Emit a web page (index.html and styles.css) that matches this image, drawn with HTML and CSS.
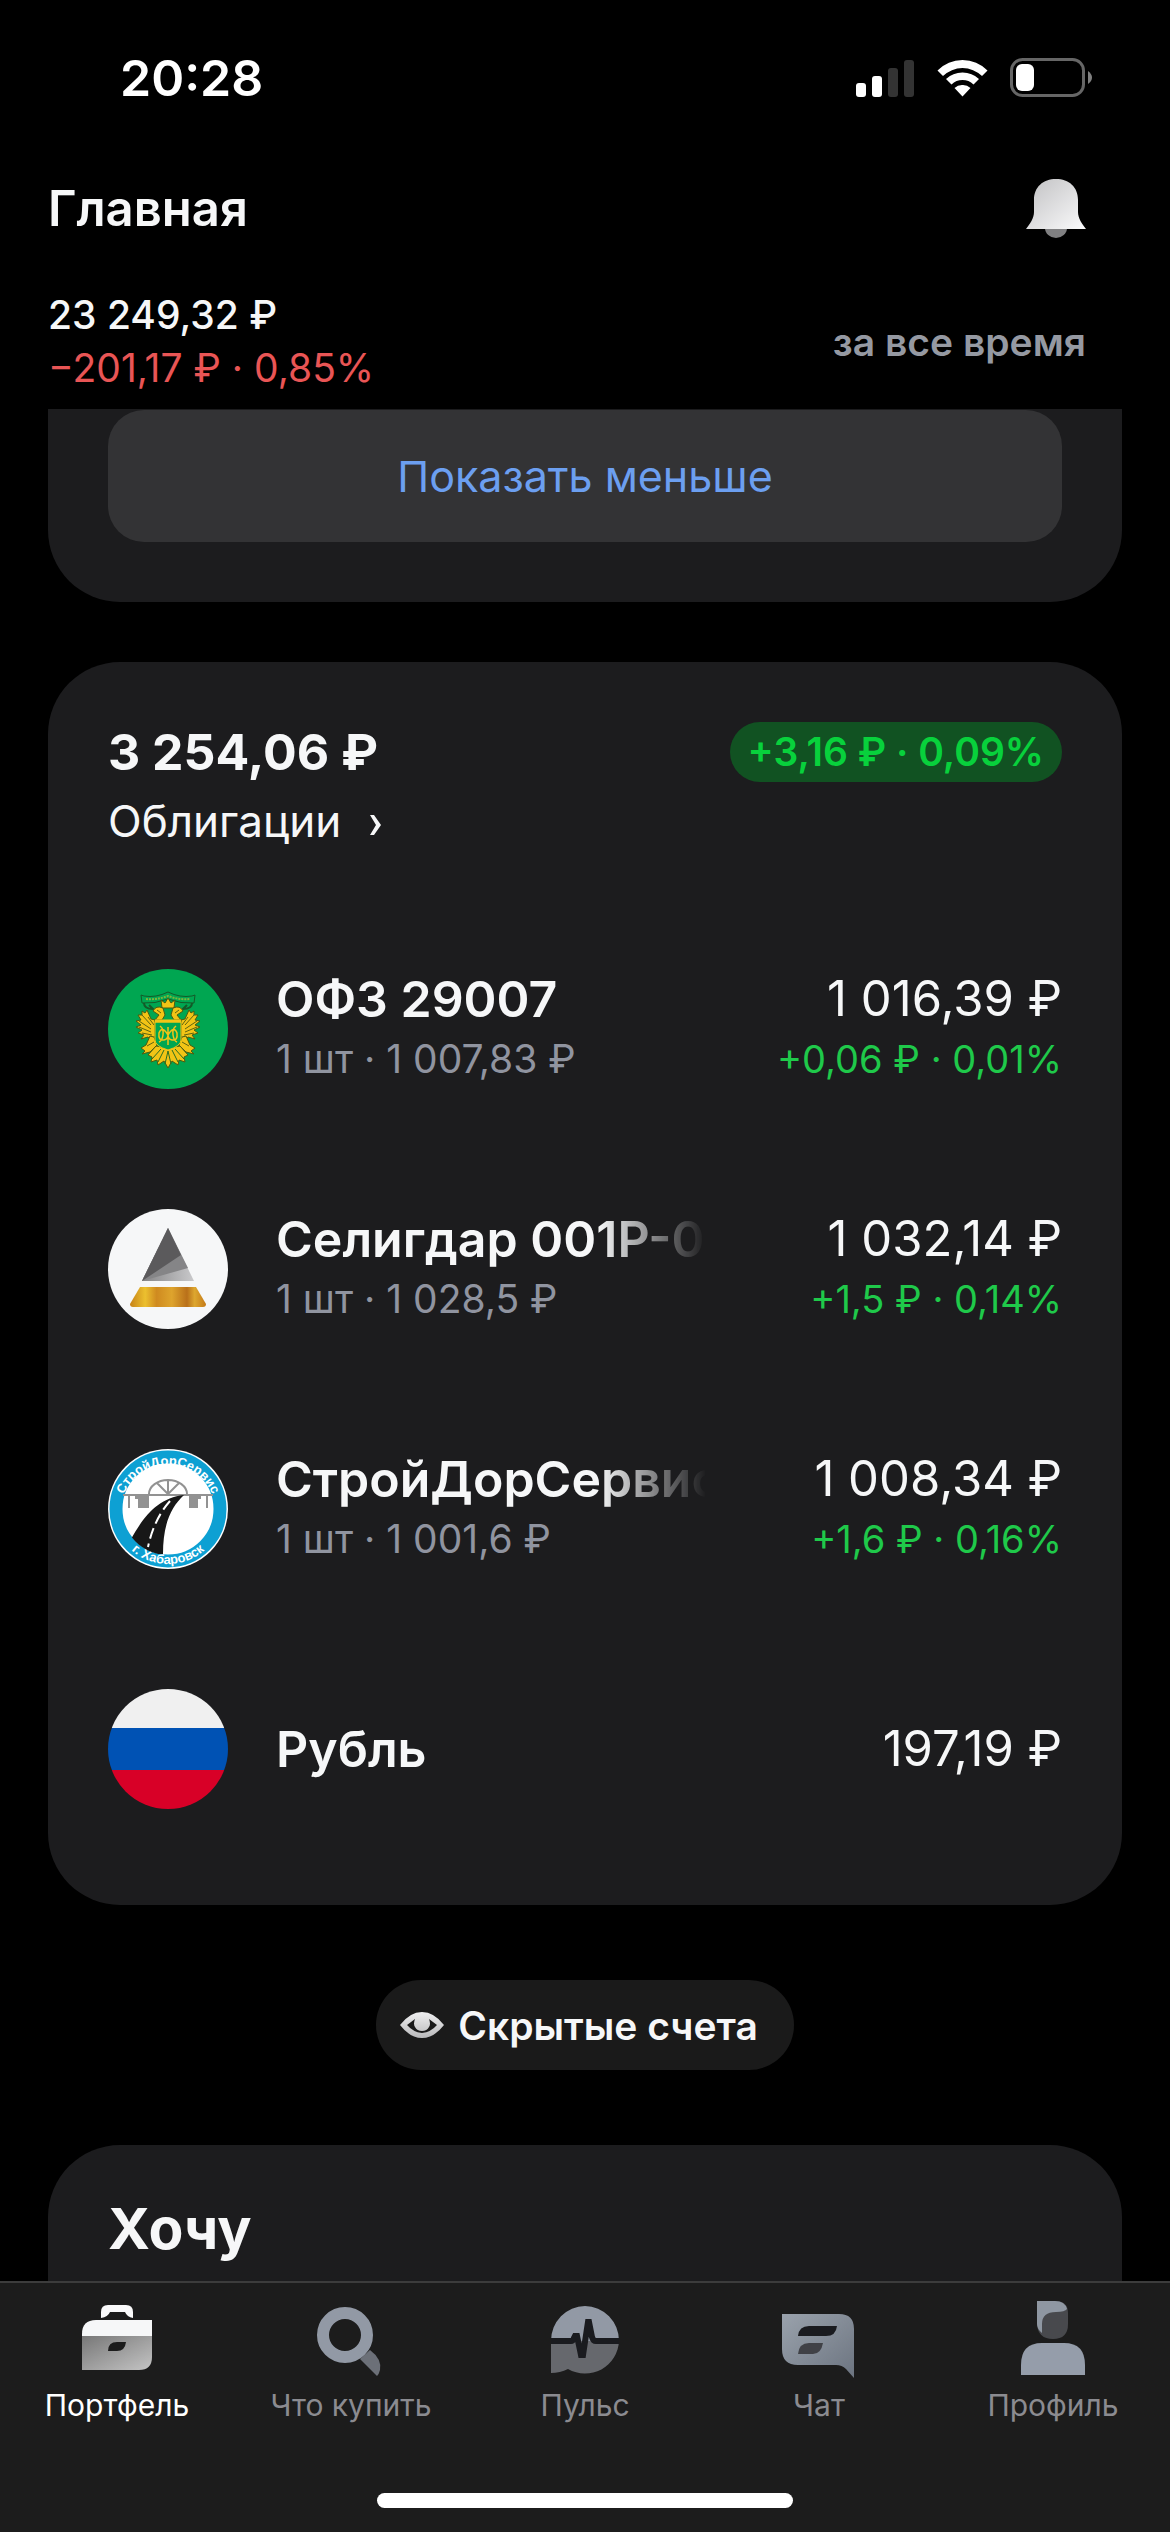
FILE: index.html
```html
<!DOCTYPE html>
<html lang="ru">

<head>
  <meta charset="UTF-8" />
  <meta name="viewport" content="width=device-width, initial-scale=1.0" />
  <title>Главная</title>
  <link rel="stylesheet" href="styles.css">
</head>

<body>
  <div class="status-bar">
    <span class="time">20:28</span>
    <div class="status-icons">
      <svg width="59" height="38" viewBox="0 0 59 38">
        <rect x="0" y="24" width="10" height="14" rx="3" fill="#fff" />
        <rect x="16" y="17" width="10" height="21" rx="3" fill="#fff" />
        <rect x="32" y="9" width="10" height="29" rx="3" fill="#333" />
        <rect x="48" y="1" width="10" height="37" rx="3" fill="#333" />
      </svg>
      <svg width="51" height="38" viewBox="0 0 51 38" fill="#fff">
        <path d="M25.500 1 A36 36 0 0 1 50.500 11.500 L45 17 A28 28 0 0 0 6 17 L.5 11.500 A36 36 0 0 1 25.500 1Z" />
        <path d="M25.500 13.500 A24 24 0 0 1 42 20 L36.500 25.500 A16 16 0 0 0 14.500 25.500 L9 20 A24 24 0 0 1 25.500 13.500Z" />
        <path d="M25.500 26 A11 11 0 0 1 33.500 29 L25.500 37.500 L17.500 29 A11 11 0 0 1 25.500 26Z" />
      </svg>
      <svg width="82" height="40" viewBox="0 0 82 40">
        <rect x="1.500" y="1.500" width="72" height="36" rx="11" fill="none" stroke="#666" stroke-width="3" />
        <rect x="6" y="6" width="18" height="27" rx="6" fill="#fff" />
        <path d="M78 13 Q82 16 82 19.500 T78 26Z" fill="#808080" />
      </svg>
    </div>
  </div>

  <header class="header">
    <div class="title-row">
      <h1>Главная</h1>
      <button class="bell" aria-label="Уведомления">
        <svg width="60" height="60" viewBox="0 0 60 60">
          <defs>
            <linearGradient id="bell" x1="0" y1="0" x2="1" y2="1">
              <stop offset="0" stop-color="#c0c0c2" />
              <stop offset="1" stop-color="#fbfbfc" />
            </linearGradient>
          </defs>
          <ellipse cx="30" cy="50" rx="11" ry="10" fill="#808082" />
          <path d="M0 51 C4 46 8 40 8 34 V22 C8 9 17 1 30 1 S52 9 52 22 V34 C52 40 56 46 60 51Z" fill="url(#bell)" />
        </svg>
      </button>
    </div>
    <div class="summary">
      <div>
        <div class="total">23 249,32 ₽</div>
        <div class="loss">−201,17 ₽ · 0,85%</div>
      </div>
      <span class="period">за все время</span>
    </div>
  </header>

  <main class="content">
    <section class="card card-top">
      <button class="less">Показать меньше</button>
    </section>

    <section class="card card-bonds">
      <div class="bonds-head">
        <h2>3 254,06 ₽</h2>
        <span class="badge">+3,16 ₽ · 0,09%</span>
      </div>
      <a href="#" class="bonds-link">Облигации
        <svg width="13" height="28" viewBox="0 0 13 28"><path d="M1 7 H5 L12 17 L5 27 H1 L7 17Z" fill="#f6f7f8" /></svg>
      </a>

      <ul class="assets">
        <li class="asset">
          <svg class="logo" viewBox="0 0 120 120">
            <circle cx="60" cy="60" r="60" fill="#00a651" />
            <g fill="none" stroke="#145a28" stroke-width="1">
              <path d="M33 26 L36 27 Q48 29 60 23 Q72 29 84 27 L87 26 L86 34 Q73 35 60 30 Q47 35 34 34Z" />
              <path d="M36 34 Q36 40 45 40 L41 36 M84 34 Q84 40 75 40 L79 36" stroke-width="2" />
            </g>
            <path d="M38 30 Q49 31 60 27 Q71 31 82 30" fill="none" stroke="#7db53a" stroke-width="2" stroke-dasharray="2 1" />
            <g fill="#f2c416" stroke="#4c5c10" stroke-width="1">
              <path d="M54 39 L53 31 L57 34 L60 29 L63 34 L67 31 L66 39Z" />
              <path d="M45 42 Q48 36 55 39 L57 46 L54 51 H47 L51 46Z M75 42 Q72 36 65 39 L63 46 L66 51 H73 L69 46Z" />
              <path d="M47 51 L43 50 L39 41 L37 44 L34 42 L34 46 L30 46 L33 51 L28 52 L33 56 L28 58 L34 61 L30 64 L36 66 L33 70 L40 68 L44 73 L47 67Z" />
              <path d="M73 51 L77 50 L81 41 L83 44 L86 42 L86 46 L90 46 L87 51 L92 52 L87 56 L92 58 L86 61 L90 64 L84 66 L87 70 L80 68 L76 73 L73 67Z" />
              <path d="M42 67 L38 76 L33 79 L37 82 L34 85 L42 83 L49 76 L46 68Z M78 67 L82 76 L87 79 L83 82 L86 85 L78 83 L71 76 L74 68Z" />
              <path d="M60 79 L48 77 L40 86 L44 88 L43 93 L49 91 L50 96 L56 92 L60 99 L64 92 L70 96 L71 91 L77 93 L76 88 L80 86 L72 77Z" />
            </g>
            <g fill="none" stroke="#5d6410" stroke-width="1">
              <path d="M34 46 L43 56 M31 52 L43 60 M31 58 L43 63 M34 64 L44 66 M40 48 L46 56" />
              <path d="M86 46 L77 56 M89 52 L77 60 M89 58 L77 63 M86 64 L76 66 M80 48 L74 56" />
              <path d="M39 77 L46 73 M81 77 L74 73 M49 41 L53 44 M71 41 L67 44" />
            </g>
            <path d="M60 82 L57 95 M60 82 L63 95 M56 81 L50 93 M64 81 L70 93 M53 80 L44 90 M67 80 L76 90" stroke="#286d22" stroke-width="1" />
            <path d="M47 53 H73 V71 Q73 77 60 81 Q47 77 47 71Z" fill="#00a651" stroke="#f2c416" stroke-width="1" />
            <path d="M47 52 H73" stroke="#f2c416" stroke-width="3" />
            <path d="M52 57 Q56 60 55 66 T51 73 M68 57 Q64 60 65 66 T69 73 M60 58 V76 M60 66 Q54 56 51 64 Q50 72 56 71 Q60 70 60 66 Q66 56 69 64 Q70 72 64 71 Q60 70 60 66" fill="none" stroke="#f2c416" stroke-width="1.500" />
          </svg>
          <div class="info">
            <div class="name">ОФЗ 29007</div>
            <div class="count">1 шт · 1 007,83 ₽</div>
          </div>
          <div class="value">
            <div class="price">1 016,39 ₽</div>
            <div class="gain">+0,06 ₽ · 0,01%</div>
          </div>
        </li>
        <li class="asset">
          <svg class="logo" viewBox="0 0 120 120">
            <defs>
              <linearGradient id="gold">
                <stop offset="0" stop-color="#c78318" />
                <stop offset=".2" stop-color="#ecc02f" />
                <stop offset=".35" stop-color="#cf8a20" />
                <stop offset=".55" stop-color="#dea42d" />
                <stop offset=".75" stop-color="#b9701a" />
                <stop offset=".85" stop-color="#dda72f" />
                <stop offset="1" stop-color="#c47a18" />
              </linearGradient>
              <linearGradient id="steel">
                <stop offset="0" stop-color="#858587" />
                <stop offset="1" stop-color="#c9c9cb" />
              </linearGradient>
            </defs>
            <circle cx="60" cy="60" r="60" fill="#f6f7f8" />
            <path d="M60 19 L86 72 H34Z" fill="url(#steel)" />
            <path d="M60 19 L80 59 L34 72Z" fill="#858587" />
            <path d="M60 19 L73 46 L34 72Z" fill="#5b5a5c" />
            <path d="M32 78 H88 L98 95 Q98 98 95 98 H25 Q22 98 22 95Z" fill="url(#gold)" />
          </svg>
          <div class="info">
            <div class="name fade">Селигдар 001Р-0</div>
            <div class="count">1 шт · 1 028,5 ₽</div>
          </div>
          <div class="value">
            <div class="price">1 032,14 ₽</div>
            <div class="gain">+1,5 ₽ · 0,14%</div>
          </div>
        </li>
        <li class="asset">
          <svg class="logo" viewBox="0 0 120 120">
            <defs>
              <path id="arc-top" d="M12 64 A48 48 0 0 1 108 64" />
              <path id="arc-bottom" d="M4 59 A56 56 0 0 0 116 59" />
              <clipPath id="inner"><circle cx="60" cy="60" r="46" /></clipPath>
            </defs>
            <circle cx="60" cy="60" r="60" fill="#fff" />
            <circle cx="60" cy="60" r="52" fill="none" stroke="#0da0d3" stroke-width="13" />
            <g stroke="#929292" fill="none" stroke-width="2">
              <path d="M15 46 H105 M21 46 V59 M99 46 V59 M41 45 A19 14 0 0 1 79 45 M60 45 V31 M60 45 L49 34 M60 45 L71 34" />
            </g>
            <path d="M27 46 H41 V59 H30 V50 H27Z M81 46 H93 V50 H90 V59 H81Z" fill="#929292" />
            <g clip-path="url(#inner)">
              <path d="M76 46 C50 49 36 67 23 90 L31 105 H55 C55 75 63 58 76 46Z" fill="#171717" />
              <path d="M62 52 Q46 70 40 98" fill="none" stroke="#fff" stroke-width="2" stroke-dasharray="11 5" />
            </g>
            <text class="logo-text"><textPath href="#arc-top" startOffset="50%" text-anchor="middle">СтройДорСервис</textPath></text>
            <text class="logo-text"><textPath href="#arc-bottom" startOffset="50%" text-anchor="middle">г. Хабаровск</textPath></text>
          </svg>
          <div class="info">
            <div class="name fade">СтройДорСервис</div>
            <div class="count">1 шт · 1 001,6 ₽</div>
          </div>
          <div class="value">
            <div class="price">1 008,34 ₽</div>
            <div class="gain">+1,6 ₽ · 0,16%</div>
          </div>
        </li>
        <li class="asset">
          <svg class="logo" viewBox="0 0 120 120">
            <defs><clipPath id="flag"><circle cx="60" cy="60" r="60" /></clipPath></defs>
            <g clip-path="url(#flag)">
              <rect width="120" height="39" fill="#f0f0f0" />
              <rect y="39" width="120" height="42" fill="#0052b4" />
              <rect y="81" width="120" height="39" fill="#d80027" />
            </g>
          </svg>
          <div class="info">
            <div class="name">Рубль</div>
          </div>
          <div class="value">
            <div class="price">197,19 ₽</div>
          </div>
        </li>
      </ul>
    </section>

    <button class="hidden-accounts">
      <svg width="44" height="26" viewBox="0 0 44 26">
        <defs>
          <linearGradient id="eye" x1="0" y1="0" x2="0" y2="1">
            <stop offset="0" stop-color="#f0f0f1" />
            <stop offset="1" stop-color="#b9b9bb" />
          </linearGradient>
        </defs>
        <path fill-rule="evenodd" fill="url(#eye)" d="M0 13 Q10 0 22 0 T44 13 Q34 26 22 26 T0 13Z M7 13 Q13 20 22 21 Q31 20 37 13 L29 7 Q31 12 29 15 Q27 19 22 19 T15 15 Q13 12 15 7Z" />
      </svg>
      Скрытые счета
    </button>

    <section class="card card-wish">
      <h2>Хочу</h2>
    </section>
  </main>

  <nav class="tabs">
    <div class="tab-list">
      <a href="#" class="tab active">
        <svg viewBox="0 0 80 80">
          <defs>
            <linearGradient id="case" x1="0" y1="0" x2="1" y2="1">
              <stop offset="0" stop-color="#777" />
              <stop offset="1" stop-color="#c4c4c4" />
            </linearGradient>
          </defs>
          <path d="M24 18 V12 Q24 5 31 5 H49 Q56 5 56 12 V18 Q50 17 48 12 H33 Q31 17 24 18Z" fill="#fafafb" />
          <path d="M5 36 V34 Q5 20 19 20 H75 V36Z" fill="#f6f7f8" />
          <path fill-rule="evenodd" d="M5 36 H75 V57 Q75 70 62 70 H5Z M31 51 H40 Q48 51 49 42 H40 Q31 42 31 51Z" fill="url(#case)" />
        </svg>
        Портфель
      </a>
      <a href="#" class="tab">
        <svg viewBox="0 0 80 80">
          <path d="M49 59 L59 50 Q71 59 69 70 Q68 74 66 76Z" fill="#6c7078" />
          <circle cx="34" cy="35" r="22" fill="none" stroke="#9299a5" stroke-width="12" />
        </svg>
        Что купить
      </a>
      <a href="#" class="tab">
        <svg viewBox="0 0 80 80">
          <path d="M6 41 A34 35 0 0 1 74 41Z" fill="#9299a5" />
          <path d="M6 41 H74 A34 34 0 0 1 23 69 Q15 73 6 73Z" fill="#66686d" />
          <path d="M6 41 H26 Q28 41 29 38 L30 36 H32 L35 50 L36 55 H38 L43 22 H44 L47 37 Q48 41 51 41 H74" fill="none" stroke="#1a1b1f" stroke-width="6" />
        </svg>
        Пульс
      </a>
      <a href="#" class="tab">
        <svg viewBox="0 0 80 80">
          <defs>
            <linearGradient id="chat" x1="0" y1="0" x2="1" y2="1">
              <stop offset="0" stop-color="#9aa2ac" />
              <stop offset="1" stop-color="#6c7480" />
            </linearGradient>
          </defs>
          <path d="M3 14 H60 Q75 14 75 29 V78 L67 69 Q63 65 57 65 H19 Q3 65 3 49Z" fill="url(#chat)" />
          <path d="M19 36 Q20 26 30 26 H58 Q57 36 47 36Z" fill="#1a1b1f" />
          <path d="M19 54 Q20 43 30 43 H44 Q42 54 34 54Z" fill="#404146" />
        </svg>
        Чат
      </a>
      <a href="#" class="tab">
        <svg viewBox="0 0 80 80">
          <path d="M24 1 H42 Q55 1 55 13 V24 Q55 39 40 39 T24 24Z" fill="#48494d" />
          <path d="M24 1 H42 Q52 1 54 9 Q52 12 43 12 Q29 12 29 24 V33 Q24 29 24 24Z" fill="#8f97a2" />
          <path d="M8 75 V65 Q8 43 29 43 H51 Q72 43 72 65 V75Z" fill="#959daa" />
        </svg>
        Профиль
      </a>
    </div>
    <div class="home-indicator"></div>
  </nav>
</body>

</html>
```

FILE: styles.css
```css
* {
  box-sizing: border-box;
}

body {
  margin: 0;
  height: 100vh;
  display: flex;
  flex-direction: column;
  overflow: hidden;
  background: #000;
  color: #f6f7f8;
  font-family: Inter, "Liberation Sans", sans-serif;
}

h1,
h2,
ul {
  margin: 0;
  padding: 0;
}

button {
  border: none;
  padding: 0;
  background: none;
  color: inherit;
  font-family: inherit;
  cursor: pointer;
}

a {
  color: inherit;
  text-decoration: none;
}

svg {
  display: block;
  flex: none;
}

.status-bar {
  display: flex;
  justify-content: space-between;
  align-items: center;
  height: 156px;
  padding: 0 78px 0 120px;
}

.time {
  font-size: 50px;
  font-weight: 600;
  color: #fff;
}

.status-icons {
  display: flex;
  align-items: center;
  gap: 22px;
}

.header {
  height: 253px;
  padding: 22px 84px 0 48px;
}

.title-row {
  display: flex;
  justify-content: space-between;
  align-items: center;
  height: 60px;
}

h1 {
  font-size: 49px;
  font-weight: 600;
}

.bell {
  display: flex;
}

.summary {
  display: flex;
  justify-content: space-between;
  align-items: center;
  margin-top: 50px;
  font-size: 39px;
  line-height: 53px;
  font-weight: 500;
}

.loss {
  color: #e95555;
  font-weight: 400;
}

.period {
  color: #9599a2;
  font-weight: 600;
}

.content {
  flex: 1;
  min-height: 0;
  overflow: hidden;
  display: flex;
  flex-direction: column;
  padding: 0 48px;
}

.card {
  flex: none;
  padding: 60px;
  border-radius: 72px;
  background: #1c1c1e;
}

.card-top {
  padding-top: 1px;
  border-radius: 0 0 72px 72px;
}

.less {
  display: block;
  width: 100%;
  height: 132px;
  border-radius: 36px;
  background: #333335;
  color: #6c9ff0;
  font-size: 43px;
}

.card-bonds {
  margin-top: 60px;
}

.bonds-head {
  display: flex;
  justify-content: space-between;
  align-items: center;
}

h2 {
  font-size: 50px;
  line-height: 60px;
  font-weight: 700;
}

.badge {
  height: 60px;
  padding: 0 18px;
  border-radius: 30px;
  background: #115222;
  color: #08d13c;
  font-size: 39px;
  line-height: 60px;
  font-weight: 600;
}

.bonds-link {
  display: flex;
  align-items: center;
  gap: 28px;
  margin-top: 12px;
  font-size: 44px;
  line-height: 55px;
}

.assets {
  list-style: none;
  margin-top: 120px;
  display: flex;
  flex-direction: column;
  gap: 120px;
  padding-bottom: 36px;
}

.asset {
  display: flex;
  align-items: center;
  height: 120px;
}

.logo {
  width: 120px;
  height: 120px;
}

.logo-text {
  fill: #fff;
  font-family: "Liberation Sans", sans-serif;
  font-size: 13px;
  font-weight: 700;
}

.info {
  flex: 1;
  min-width: 0;
  margin-left: 48px;
}

.name,
.price {
  font-size: 50px;
  line-height: 60px;
  white-space: nowrap;
}

.name {
  font-weight: 600;
}

.price {
  font-size: 49px;
}

/* long names dissolve before the price column */
.fade {
  width: 430px;
  -webkit-mask-image: linear-gradient(to right, #000 75%, transparent);
  mask-image: linear-gradient(to right, #000 75%, transparent);
}

.count,
.gain {
  font-size: 39px;
  line-height: 60px;
}

.count {
  color: #9094a0;
}

.value {
  text-align: right;
  white-space: nowrap;
}

.gain {
  color: #1fc94a;
  font-size: 38px;
}

.hidden-accounts {
  flex: none;
  align-self: center;
  display: flex;
  align-items: center;
  gap: 14px;
  height: 90px;
  margin: 75px 0;
  padding: 0 36px 0 24px;
  border-radius: 45px;
  background: #1a1a1a;
  font-size: 39px;
  font-weight: 600;
}

.card-wish {
  padding-top: 54px;
  border-radius: 72px 72px 0 0;
}

.card-wish h2 {
  font-size: 57px;
}

.tabs {
  flex: none;
  height: 251px;
  border-top: 2px solid #3c3c3c;
  background: #1c1c1c;
  display: flex;
  flex-direction: column;
  justify-content: space-between;
  padding: 17px 0 24px;
}

.tab-list {
  display: grid;
  grid-template-columns: repeat(5, 1fr);
}

.tab {
  display: flex;
  flex-direction: column;
  align-items: center;
  gap: 7px;
  color: #8b8b90;
  font-size: 30px;
  line-height: 36px;
}

.tab svg {
  width: 80px;
  height: 80px;
}

.tab.active {
  color: #fff;
}

.home-indicator {
  align-self: center;
  width: 416px;
  height: 15px;
  border-radius: 8px;
  background: #fff;
}
```
